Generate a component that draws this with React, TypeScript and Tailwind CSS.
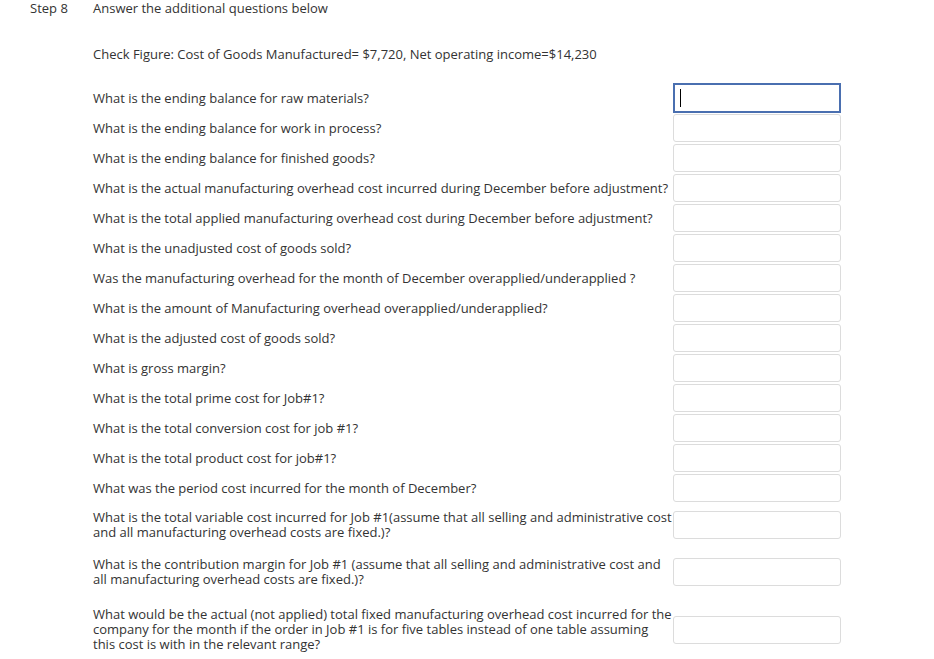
const questions: string[] = [
  'What is the ending balance for raw materials?',
  'What is the ending balance for work in process?',
  'What is the ending balance for finished goods?',
  'What is the actual manufacturing overhead cost incurred during December before adjustment?',
  'What is the total applied manufacturing overhead cost during December before adjustment?',
  'What is the unadjusted cost of goods sold?',
  'Was the manufacturing overhead for the month of December overapplied/underapplied ?',
  'What is the amount of Manufacturing overhead overapplied/underapplied?',
  'What is the adjusted cost of goods sold?',
  'What is gross margin?',
  'What is the total prime cost for Job#1?',
  'What is the total conversion cost for job #1?',
  'What is the total product cost for job#1?',
  'What was the period cost incurred for the month of December?',
];

const longQuestions = [
  {
    text: 'What is the total variable cost incurred for Job #1(assume that all selling and administrative cost and all manufacturing overhead costs are fixed.)?',
    gap: 'mt-[7px]',
  },
  {
    text: 'What is the contribution margin for Job #1 (assume that all selling and administrative cost and all manufacturing overhead costs are fixed.)?',
    gap: 'mt-[17px]',
  },
  {
    text: 'What would be the actual (not applied) total fixed manufacturing overhead cost incurred for the company for the month if the order in Job #1 is for five tables instead of one table assuming this cost is with in the relevant range?',
    gap: 'mt-[20px]',
  },
];

function AnswerBox({ active }: { active?: boolean }) {
  if (active) {
    return (
      <div className="w-[168px] h-[30px] border-2 border-[#4a6fb0] bg-white flex items-center pl-[5px]">
        <div className="w-px h-[18px] bg-black" />
      </div>
    );
  }
  return <div className="w-[168px] h-[28px] border border-[#dcdcdc] rounded-[3px] bg-white" />;
}

export default function App() {
  return (
    <div
      className="w-[934px] h-[659px] bg-white text-[#333] text-[13px] leading-[15px] overflow-hidden"
      style={{ fontFamily: '"Open Sans", "Liberation Sans", sans-serif' }}
    >
      <div className="flex pt-[1px]">
        <div className="w-[93px] pl-[30px]">Step 8</div>
        <div>Answer the additional questions below</div>
      </div>

      <div className="pl-[93px] mt-[31px]">
        Check Figure: Cost of Goods Manufactured= $7,720, Net operating income=$14,230
      </div>

      <div className="pl-[93px] mt-[21px]">
        {questions.map((q, i) => (
          <div key={i} className="flex items-center h-[30px]">
            <div className="w-[580px]">{q}</div>
            <AnswerBox active={i === 0} />
          </div>
        ))}

        {longQuestions.map((q, i) => (
          <div key={i} className={`flex items-center ${q.gap}`}>
            <div className="w-[580px]">{q.text}</div>
            <AnswerBox />
          </div>
        ))}
      </div>
    </div>
  );
}
